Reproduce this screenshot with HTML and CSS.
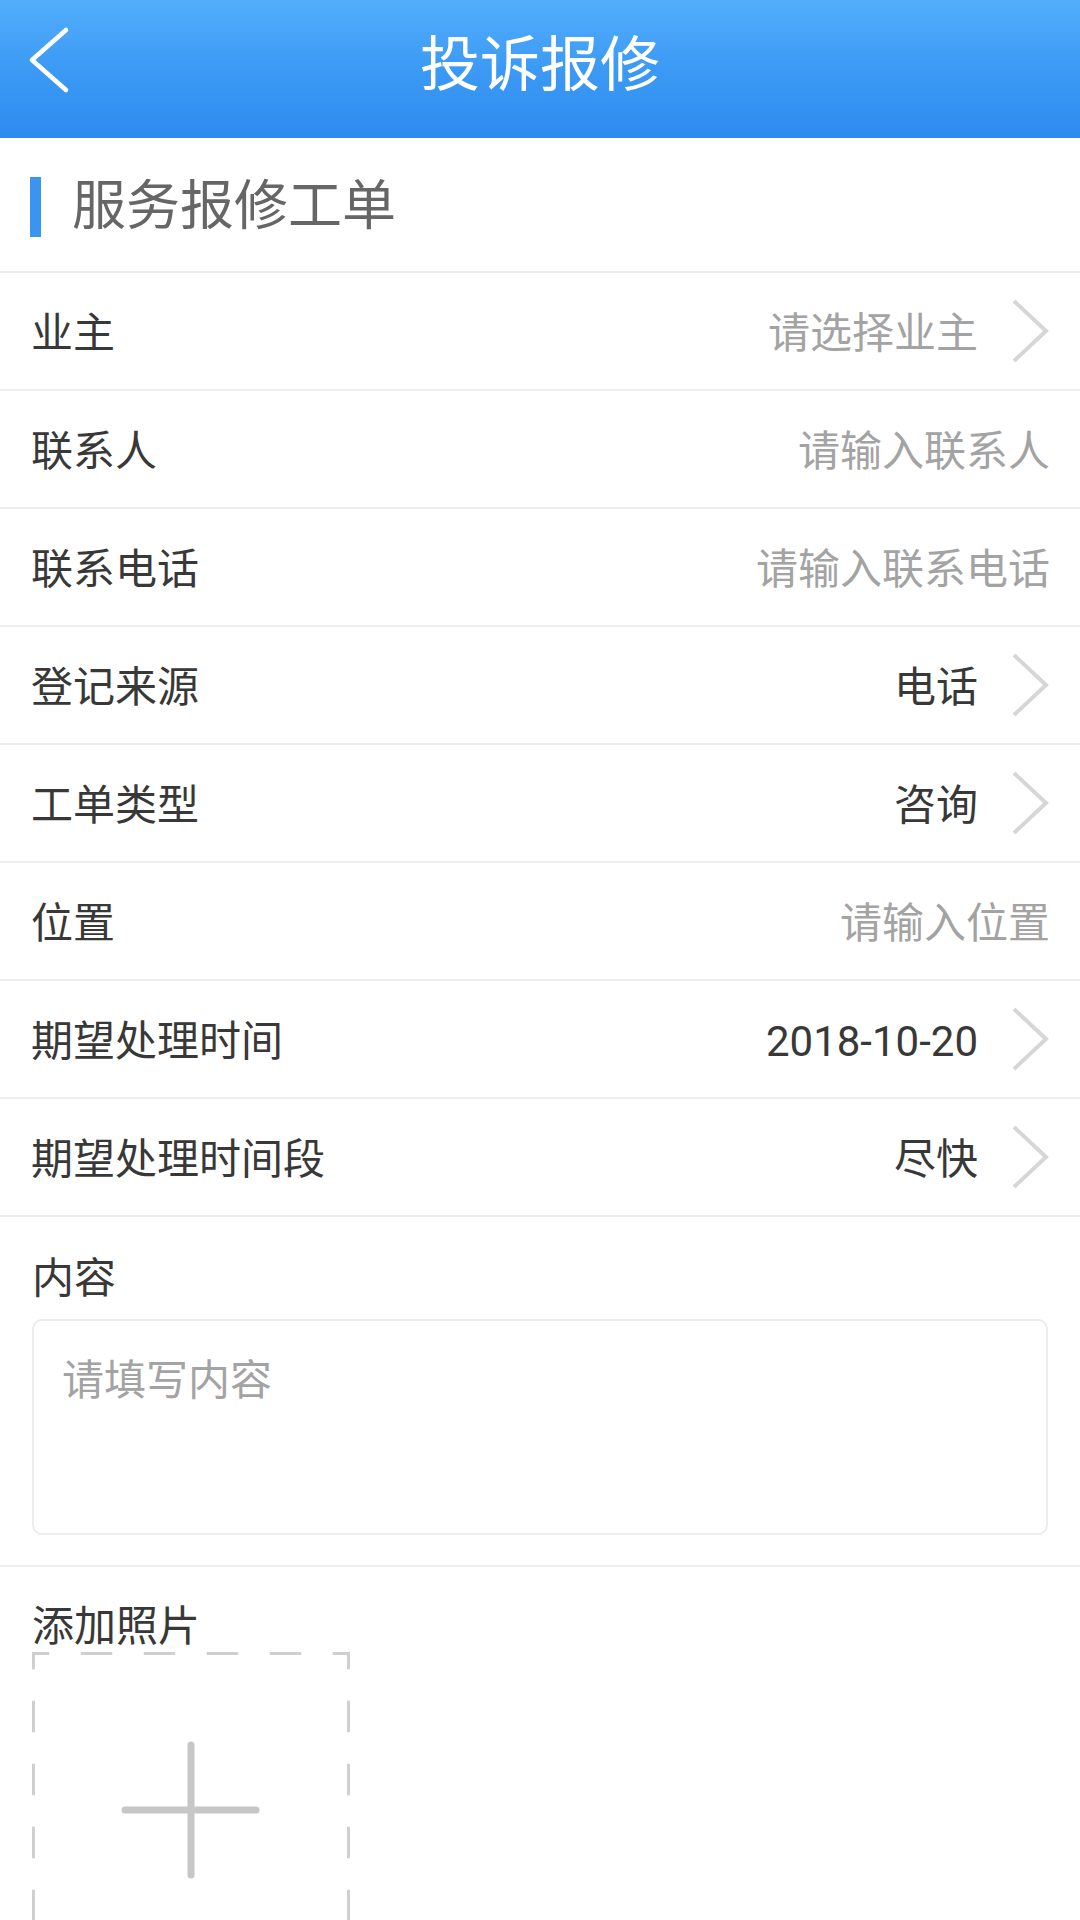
FILE: index.html
```html
<!DOCTYPE html>
<html lang="zh-CN">
<head>
<meta charset="utf-8">
<title>投诉报修</title>
<link rel="stylesheet" href="styles.css">
</head>
<body>
<div class="page">
  <header class="topbar">
    <svg class="back" width="44" height="70" viewBox="0 0 44 70"><polyline points="38,4 4,34 38,64" fill="none" stroke="#fff" stroke-width="4.5" stroke-linecap="round" stroke-linejoin="round"/></svg>
    <h1 class="topbar-title">投诉报修</h1>
  </header>

  <div class="section-head">
    <span class="bar"></span>
    <span class="section-title">服务报修工单</span>
  </div>

  <div class="row">
    <span class="label">业主</span>
    <span class="value placeholder">请选择业主</span>
    <svg class="chev" width="40" height="66" viewBox="0 0 40 66"><polyline points="4,3 36,33 4,63" fill="none" stroke="#d6d6d6" stroke-width="4"/></svg>
  </div>
  <div class="row">
    <span class="label">联系人</span>
    <span class="value placeholder">请输入联系人</span>
  </div>
  <div class="row">
    <span class="label">联系电话</span>
    <span class="value placeholder">请输入联系电话</span>
  </div>
  <div class="row">
    <span class="label">登记来源</span>
    <span class="value">电话</span>
    <svg class="chev" width="40" height="66" viewBox="0 0 40 66"><polyline points="4,3 36,33 4,63" fill="none" stroke="#d6d6d6" stroke-width="4"/></svg>
  </div>
  <div class="row">
    <span class="label">工单类型</span>
    <span class="value">咨询</span>
    <svg class="chev" width="40" height="66" viewBox="0 0 40 66"><polyline points="4,3 36,33 4,63" fill="none" stroke="#d6d6d6" stroke-width="4"/></svg>
  </div>
  <div class="row">
    <span class="label">位置</span>
    <span class="value placeholder">请输入位置</span>
  </div>
  <div class="row">
    <span class="label">期望处理时间</span>
    <span class="value">2018-10-20</span>
    <svg class="chev" width="40" height="66" viewBox="0 0 40 66"><polyline points="4,3 36,33 4,63" fill="none" stroke="#d6d6d6" stroke-width="4"/></svg>
  </div>
  <div class="row">
    <span class="label">期望处理时间段</span>
    <span class="value">尽快</span>
    <svg class="chev" width="40" height="66" viewBox="0 0 40 66"><polyline points="4,3 36,33 4,63" fill="none" stroke="#d6d6d6" stroke-width="4"/></svg>
  </div>

  <div class="block content-block">
    <div class="block-label">内容</div>
    <div class="textbox"><span class="placeholder">请填写内容</span></div>
  </div>

  <div class="block photo-block">
    <div class="block-label">添加照片</div>
    <div class="photo-add">
      <svg width="318" height="318" viewBox="0 0 318 318">
        <rect x="1.5" y="1.5" width="315" height="315" fill="none" stroke="#cfcfcf" stroke-width="3" stroke-dasharray="31.5 31.5" stroke-dashoffset="15.75"/>
        <line x1="93" y1="158" x2="224" y2="158" stroke="#c6c6c6" stroke-width="7" stroke-linecap="round"/>
        <line x1="159" y1="93" x2="159" y2="223" stroke="#c6c6c6" stroke-width="7" stroke-linecap="round"/>
      </svg>
    </div>
  </div>
</div>
</body>
</html>
```

FILE: styles.css
```css
* { box-sizing: border-box; }
html, body {
  margin: 0;
  padding: 0;
  background: #ffffff;
}
body {
  font-family: Roboto, "Noto Sans CJK SC", "Noto Sans", sans-serif;
  color: #383838;
}
.page {
  width: 1080px;
}
.topbar {
  height: 138px;
  background: linear-gradient(to bottom, #52aefb 0%, #3c9af5 50%, #2e8bef 100%);
  display: flex;
  align-items: center;
  justify-content: center;
  position: relative;
  padding-bottom: 6px;
}
.back {
  position: absolute;
  left: 28px;
  top: 26px;
}
.topbar-title {
  margin: 0;
  font-size: 60px;
  font-weight: 400;
  color: #ffffff;
  line-height: 70px;
}
.section-head {
  height: 135px;
  display: flex;
  align-items: center;
  padding-left: 30px;
  padding-top: 4px;
  border-bottom: 2px solid #ededed;
}
.bar {
  width: 11px;
  height: 60px;
  background: #3b94ef;
  margin-right: 31px;
}
.section-title {
  font-size: 54px;
  color: #666666;
  line-height: 64px;
}
.row {
  height: 118px;
  display: flex;
  align-items: center;
  padding: 0 30px 0 31px;
  border-bottom: 2px solid #ededed;
}
.label {
  font-size: 42px;
  color: #383838;
  line-height: 56px;
  padding-top: 5px;
}
.value {
  margin-left: auto;
  font-size: 42px;
  line-height: 56px;
  padding-top: 5px;
  color: #383838;
}
.placeholder {
  color: #a3a3a3;
}
.chev {
  margin-left: 32px;
  flex-shrink: 0;
}
.block {
  padding: 0 32px;
}
.content-block {
  padding-top: 34px;
  padding-bottom: 30px;
  border-bottom: 2px solid #ededed;
}
.block-label {
  font-size: 42px;
  line-height: 56px;
  color: #383838;
}
.textbox {
  margin-top: 12px;
  height: 216px;
  border: 2px solid #ececec;
  border-radius: 10px;
  padding: 32px 28px;
  font-size: 42px;
  line-height: 56px;
}
.photo-block {
  padding-top: 32px;
  padding-bottom: 40px;
}
.photo-add {
  margin-top: -3px;
  width: 318px;
  height: 318px;
}
.photo-add svg {
  display: block;
}
```
